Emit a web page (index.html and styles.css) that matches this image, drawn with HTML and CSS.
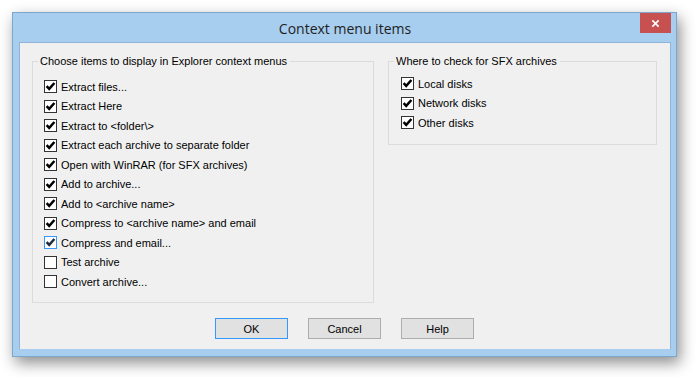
FILE: index.html
```html
<!DOCTYPE html>
<html lang="en">
<head>
  <meta charset="UTF-8">
  <title>Context menu items</title>
  <link rel="stylesheet" href="styles.css">
</head>
<body>
  <div class="window">
    <div class="title-bar">
      <span class="title">Context menu items</span>
      <div class="close-btn">
        <svg viewBox="0 0 10 10"><path d="M1.5 1.5 L8.5 8.5 M8.5 1.5 L1.5 8.5" stroke="#fff" stroke-width="1.8"/></svg>
      </div>
    </div>

    <div class="client">
      <div class="groups">
        <fieldset class="group group-left">
          <legend>Choose items to display in Explorer context menus</legend>
          <div class="items">
            <label class="item"><span class="box checked"></span>Extract files...</label>
            <label class="item"><span class="box checked"></span>Extract Here</label>
            <label class="item"><span class="box checked"></span>Extract to &lt;folder\&gt;</label>
            <label class="item"><span class="box checked"></span>Extract each archive to separate folder</label>
            <label class="item"><span class="box checked"></span>Open with WinRAR (for SFX archives)</label>
            <label class="item"><span class="box checked"></span>Add to archive...</label>
            <label class="item"><span class="box checked"></span>Add to &lt;archive name&gt;</label>
            <label class="item"><span class="box checked"></span>Compress to &lt;archive name&gt; and email</label>
            <label class="item"><span class="box checked hot"></span>Compress and email...</label>
            <label class="item"><span class="box"></span>Test archive</label>
            <label class="item"><span class="box"></span>Convert archive...</label>
          </div>
        </fieldset>

        <fieldset class="group group-right">
          <legend>Where to check for SFX archives</legend>
          <div class="items">
            <label class="item"><span class="box checked"></span>Local disks</label>
            <label class="item"><span class="box checked"></span>Network disks</label>
            <label class="item"><span class="box checked"></span>Other disks</label>
          </div>
        </fieldset>
      </div>

      <div class="buttons">
        <div class="btn default">OK</div>
        <div class="btn">Cancel</div>
        <div class="btn">Help</div>
      </div>
    </div>
  </div>
</body>
</html>
```

FILE: styles.css
```css
* {
  box-sizing: border-box;
}

body {
  margin: 0;
  background-color: #ffffff;
  font-family: "Liberation Sans", Arial, sans-serif;
  font-size: 11px;
  color: #000;
  width: 698px;
  height: 377px;
  overflow: hidden;
}

.window {
  margin: 12px 0 0 12px;
  width: 665px;
  height: 345px;
  background-color: #a7cdef;
  border: 1px solid #7ea6cc;
  padding: 0 5px 7px 6px;
  display: flex;
  flex-direction: column;
  box-shadow: 3px 6px 14px rgba(0, 0, 0, 0.45);
}

.title-bar {
  height: 29px;
  display: flex;
  align-items: center;
  justify-content: center;
  position: relative;
}

.title {
  font-family: "Open Sans", "Liberation Sans", sans-serif;
  font-size: 14px;
  color: #1e1e1e;
  margin-top: 1px;
}

.close-btn {
  position: absolute;
  top: 0;
  right: 0;
  width: 31px;
  height: 20px;
  background-color: #c75050;
  display: flex;
  align-items: center;
  justify-content: center;
}

.close-btn svg {
  width: 9px;
  height: 9px;
}

.client {
  flex: 1;
  background-color: #f0f0f0;
  border: 1px solid #8fb4d6;
  border-bottom: none;
  display: flex;
  flex-direction: column;
  padding: 12px 13px 0 12px;
}

.groups {
  display: flex;
  align-items: flex-start;
  gap: 14px;
}

.group {
  margin: 0;
  padding: 0 0 0 5px;
  border: 1px solid #dcdcdc;
  min-width: 0;
}

.group legend {
  padding: 0 3px 0 2px;
  line-height: 13px;
}

.group-left {
  width: 342px;
  height: 248px;
}

.group-right {
  width: 269px;
  height: 90px;
}

.group-left .items {
  padding: 9px 0 0 6px;
}

.group-right .items {
  padding: 6px 0 0 7px;
}

.item {
  display: flex;
  align-items: center;
  height: 19.5px;
  gap: 4px;
  white-space: nowrap;
}

.box {
  width: 13px;
  height: 13px;
  border: 1px solid #333333;
  background-color: #ffffff;
  flex-shrink: 0;
  background-repeat: no-repeat;
  background-position: center;
}

.box.checked {
  background-image: url("data:image/svg+xml,%3Csvg xmlns='http://www.w3.org/2000/svg' viewBox='0 0 11 11' width='11' height='11'%3E%3Cpath d='M1.6 5.2 L4.2 7.9 L9.4 2' fill='none' stroke='%23000' stroke-width='2.5'/%3E%3C/svg%3E");
}

.box.hot {
  border-color: #3399ff;
}

.box.checked.hot {
  background-image: url("data:image/svg+xml,%3Csvg xmlns='http://www.w3.org/2000/svg' viewBox='0 0 11 11' width='11' height='11'%3E%3Cpath d='M1.6 5.2 L4.2 7.9 L9.4 2' fill='none' stroke='%23202a3a' stroke-width='2.5'/%3E%3C/svg%3E");
}

.buttons {
  display: flex;
  justify-content: center;
  gap: 20px;
  margin-top: 15px;
}

.btn {
  width: 73px;
  height: 21px;
  background-color: #e1e1e1;
  border: 1px solid #adadad;
  display: flex;
  align-items: center;
  justify-content: center;
}

.btn.default {
  border-color: #3399ff;
}
```
